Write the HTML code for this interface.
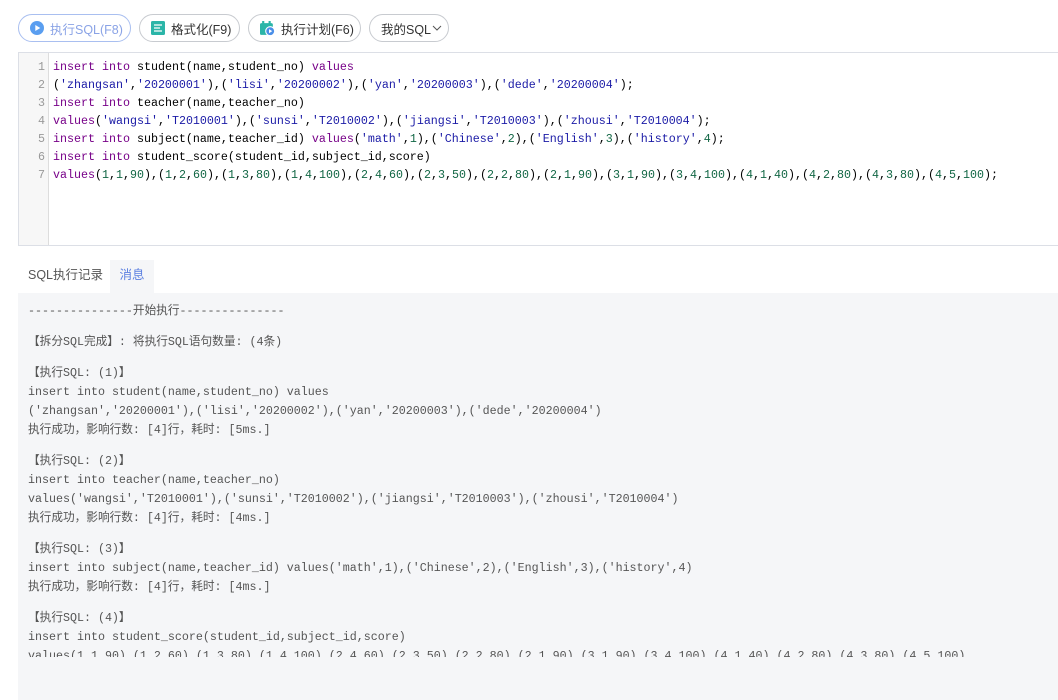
<!DOCTYPE html>
<html><head><meta charset="utf-8"><style>
*{margin:0;padding:0;box-sizing:border-box}
body{width:1058px;height:700px;background:#fff;position:relative;overflow:hidden;font-family:"Liberation Sans","Noto Sans CJK SC",sans-serif}
.btn{position:absolute;top:14px;height:28px;border:1px solid #c8cbd0;border-radius:14px;font-size:12.5px;color:#333;display:flex;align-items:center;padding:0 11px;white-space:nowrap}
.btn svg{margin-right:6px;flex:none}
.ed{position:absolute;left:18px;top:52px;width:1045px;height:194px;border:1px solid #dcdfe6;border-right:none}
.gut{position:absolute;left:0;top:0;width:30px;height:100%;background:#f7f7f7;border-right:1px solid #ddd}
.code{position:absolute;left:34px;top:5px;font-family:"Liberation Mono",monospace;font-size:11.67px;line-height:18px;color:#000;white-space:pre}
.ln{position:absolute;left:0;top:5px;width:26px;text-align:right;font-family:"Liberation Mono",monospace;font-size:11.67px;line-height:18px;color:#999;white-space:pre}
.k{color:#770088}.s{color:#1a1aa6}.n{color:#116644}
.tab{position:absolute;top:260px;height:33px;line-height:31px;font-size:12.5px;color:#555}
.msg{position:absolute;left:18px;top:293px;width:1045px;height:407px;background:#f5f6f8}
.mt{position:absolute;left:28px;top:302px;width:1030px;height:355px;overflow:hidden;font-family:"Liberation Mono","Noto Sans CJK SC",monospace;font-size:11.67px;color:#555;white-space:pre}
.mt div div{height:19px;line-height:19px;overflow:visible}
.g{margin-bottom:12px}
</style></head><body>
<div class="btn" style="left:18px;width:113px;border-color:#a9bff0;color:#8aa3e6"><svg width="14" height="14" viewBox="0 0 14 14"><circle cx="7" cy="7" r="7" fill="#5a9ef0"/><path d="M5.3 4v6l5-3z" fill="#fff"/></svg>执行SQL(F8)</div>
<div class="btn" style="left:139px;width:101px"><svg width="14" height="14" viewBox="0 0 14 14"><rect width="14" height="14" rx="1.5" fill="#2bb5a8"/><path d="M3 4h8M3 7h6M3 10h8" stroke="#fff" stroke-width="1.3"/></svg>格式化(F9)</div>
<div class="btn" style="left:248px;width:113px"><svg width="15" height="15" viewBox="0 0 14 14"><rect y="2" width="12" height="11" rx="1.5" fill="#2bb5a8"/><rect x="2" y="0" width="2" height="3" fill="#2bb5a8"/><rect x="8" y="0" width="2" height="3" fill="#2bb5a8"/><circle cx="9.5" cy="9.5" r="4.2" fill="#4a8fe8" stroke="#fff"/><path d="M8.4 7.6v3.8l3-1.9z" fill="#fff"/></svg>执行计划(F6)</div>
<div class="btn" style="left:369px;width:80px">我的SQL<svg width="10" height="8" viewBox="0 0 10 8" style="margin:0 0 0 1px"><path d="M1 2l4 4 4-4" stroke="#555" fill="none"/></svg></div>
<div class="ed"><div class="gut"></div>
<div class="ln">1
2
3
4
5
6
7</div>
<div class="code"><span class="k">insert</span> <span class="k">into</span> student(name,student_no) <span class="k">values</span>
(<span class="s">'zhangsan'</span>,<span class="s">'20200001'</span>),(<span class="s">'lisi'</span>,<span class="s">'20200002'</span>),(<span class="s">'yan'</span>,<span class="s">'20200003'</span>),(<span class="s">'dede'</span>,<span class="s">'20200004'</span>);
<span class="k">insert</span> <span class="k">into</span> teacher(name,teacher_no)
<span class="k">values</span>(<span class="s">'wangsi'</span>,<span class="s">'T2010001'</span>),(<span class="s">'sunsi'</span>,<span class="s">'T2010002'</span>),(<span class="s">'jiangsi'</span>,<span class="s">'T2010003'</span>),(<span class="s">'zhousi'</span>,<span class="s">'T2010004'</span>);
<span class="k">insert</span> <span class="k">into</span> subject(name,teacher_id) <span class="k">values</span>(<span class="s">'math'</span>,<span class="n">1</span>),(<span class="s">'Chinese'</span>,<span class="n">2</span>),(<span class="s">'English'</span>,<span class="n">3</span>),(<span class="s">'history'</span>,<span class="n">4</span>);
<span class="k">insert</span> <span class="k">into</span> student_score(student_id,subject_id,score)
<span class="k">values</span>(<span class="n">1</span>,<span class="n">1</span>,<span class="n">90</span>),(<span class="n">1</span>,<span class="n">2</span>,<span class="n">60</span>),(<span class="n">1</span>,<span class="n">3</span>,<span class="n">80</span>),(<span class="n">1</span>,<span class="n">4</span>,<span class="n">100</span>),(<span class="n">2</span>,<span class="n">4</span>,<span class="n">60</span>),(<span class="n">2</span>,<span class="n">3</span>,<span class="n">50</span>),(<span class="n">2</span>,<span class="n">2</span>,<span class="n">80</span>),(<span class="n">2</span>,<span class="n">1</span>,<span class="n">90</span>),(<span class="n">3</span>,<span class="n">1</span>,<span class="n">90</span>),(<span class="n">3</span>,<span class="n">4</span>,<span class="n">100</span>),(<span class="n">4</span>,<span class="n">1</span>,<span class="n">40</span>),(<span class="n">4</span>,<span class="n">2</span>,<span class="n">80</span>),(<span class="n">4</span>,<span class="n">3</span>,<span class="n">80</span>),(<span class="n">4</span>,<span class="n">5</span>,<span class="n">100</span>);</div>
</div>
<div class="tab" style="left:28px">SQL执行记录</div>
<div class="tab" style="left:110px;width:44px;background:#f5f6f8;color:#5b7fe0;text-align:center">消息</div>
<div class="msg"></div>
<div class="mt"><div class="g"><div>---------------开始执行---------------</div></div><div class="g"><div>【拆分SQL完成】: 将执行SQL语句数量: (4条)</div></div><div class="g"><div>【执行SQL: (1)】</div><div>insert into student(name,student_no) values</div><div>('zhangsan','20200001'),('lisi','20200002'),('yan','20200003'),('dede','20200004')</div><div>执行成功，影响行数: [4]行，耗时: [5ms.]</div></div><div class="g"><div>【执行SQL: (2)】</div><div>insert into teacher(name,teacher_no)</div><div>values('wangsi','T2010001'),('sunsi','T2010002'),('jiangsi','T2010003'),('zhousi','T2010004')</div><div>执行成功，影响行数: [4]行，耗时: [4ms.]</div></div><div class="g"><div>【执行SQL: (3)】</div><div>insert into subject(name,teacher_id) values('math',1),('Chinese',2),('English',3),('history',4)</div><div>执行成功，影响行数: [4]行，耗时: [4ms.]</div></div><div class="g"><div>【执行SQL: (4)】</div><div>insert into student_score(student_id,subject_id,score)</div><div>values(1,1,90),(1,2,60),(1,3,80),(1,4,100),(2,4,60),(2,3,50),(2,2,80),(2,1,90),(3,1,90),(3,4,100),(4,1,40),(4,2,80),(4,3,80),(4,5,100)</div></div></div>
</body></html>
